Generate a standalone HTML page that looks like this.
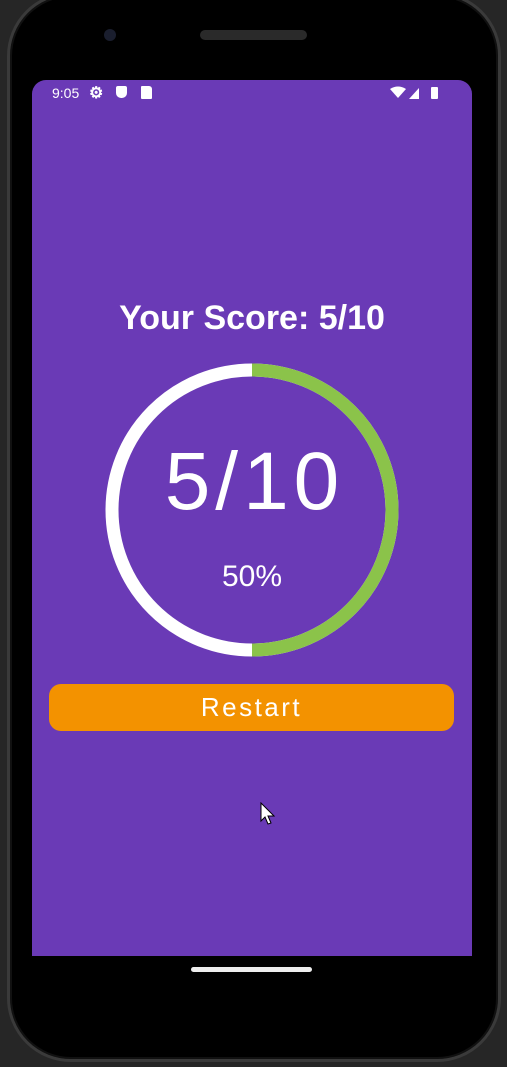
<!DOCTYPE html>
<html><head><style>
body{margin:0;width:507px;height:1067px;background:#262626;position:relative;overflow:hidden;font-family:"Liberation Sans",sans-serif}
.phone{position:absolute;left:7px;top:-8px;width:494px;height:1070px;background:#000;border-radius:64px;border:3px solid #3a3a3a;box-sizing:border-box;box-shadow:inset 0 0 0 2px #111}
.screen{position:absolute;left:32px;top:80px;width:440px;height:876px;background:#6a3ab6;border-radius:14px 14px 0 0}
.t{position:absolute;color:#fff;text-align:center;width:100%}
</style></head><body>
<div class="phone"></div>
<div style="position:absolute;left:104px;top:29px;width:12px;height:12px;border-radius:50%;background:#1a1e2e"></div>
<div style="position:absolute;left:200px;top:30px;width:107px;height:10px;border-radius:5px;background:#2a2a2a"></div>
<div class="screen">
<div style="position:absolute;left:20px;top:5px;color:#fff;font-size:14px">9:05</div>
<div style="position:absolute;left:57px;top:3px;color:#fff;font-size:16px;font-weight:bold">⚙</div>
<div style="position:absolute;left:84px;top:6px;width:11px;height:12px;background:#fff;border-radius:2px 2px 5px 5px"></div>
<div style="position:absolute;left:109px;top:6px;width:11px;height:13px;background:#fff;border-radius:1px 3px 1px 1px"></div>
<svg style="position:absolute;left:358px;top:6px" width="50" height="14"><path d="M0 3 Q8 -2 16 3 L8 12Z" fill="#fff"/><path d="M19 13 L29 2 L29 13Z" fill="#fff"/><rect x="41" y="1" width="7" height="12" rx="1" fill="#fff"/></svg>
<div class="t" style="top:219px;font-size:34px;font-weight:bold">Your Score: 5/10</div>
<svg style="position:absolute;left:72px;top:282px" width="296" height="296"><circle cx="148" cy="148" r="140" fill="none" stroke="#fff" stroke-width="13"/><path d="M148 8 A140 140 0 0 1 148 288" fill="none" stroke="#8bc34a" stroke-width="13"/></svg>
<div class="t" style="top:355px;font-size:82px;letter-spacing:5px;text-indent:5px">5/10</div>
<div class="t" style="top:480px;font-size:30px">50%</div>
<div style="position:absolute;left:17px;top:604px;width:405px;height:47px;background:#f39200;border-radius:12px;color:#fff;font-size:26px;line-height:47px;text-align:center;letter-spacing:2.5px">Restart</div>
</div>
<div style="position:absolute;left:191px;top:967px;width:121px;height:5px;border-radius:3px;background:#eee"></div>
<svg style="position:absolute;left:260px;top:802px" width="16" height="24"><path d="M1 1 L1 19 L5 15 L8 22 L11 21 L8 14 L14 14Z" fill="#fff" stroke="#000" stroke-width="1"/></svg>
</body></html>
